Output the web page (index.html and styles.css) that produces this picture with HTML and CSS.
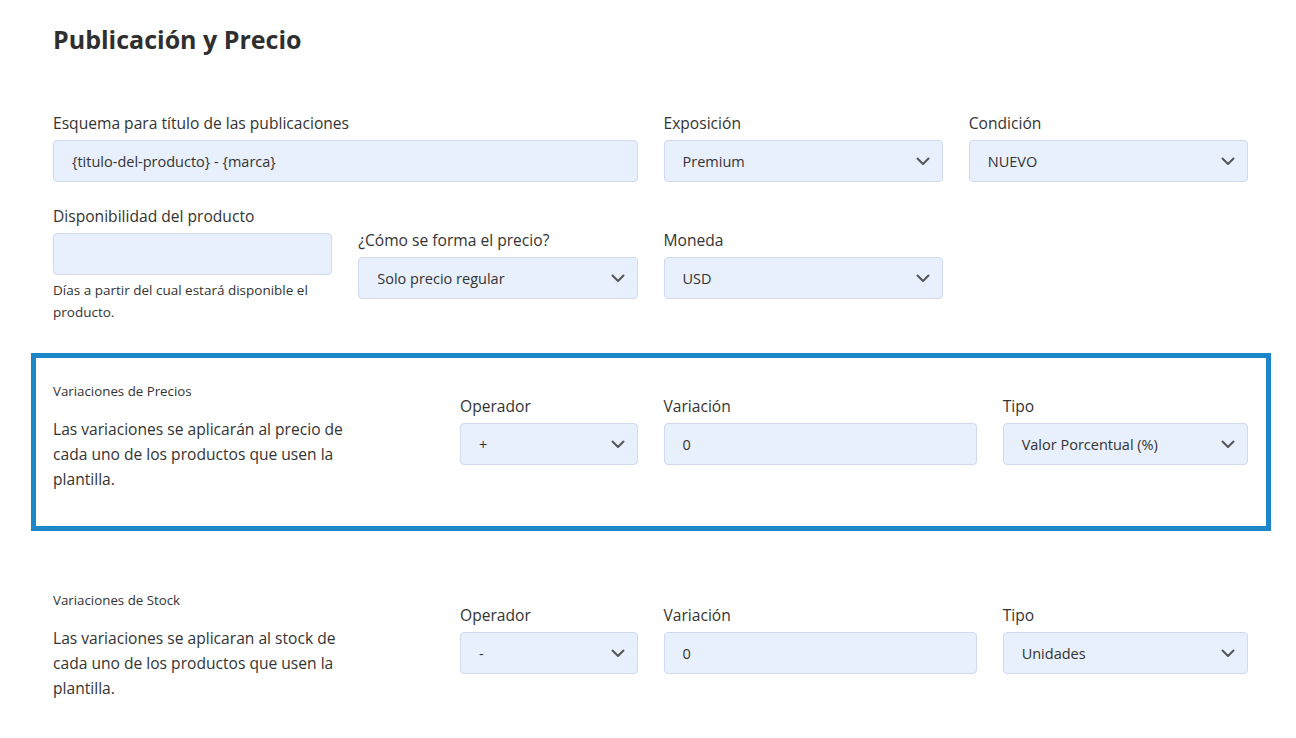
FILE: index.html
```html
<!DOCTYPE html>
<html lang="es">
<head>
<meta charset="utf-8">
<title>Publicación y Precio</title>
<link rel="stylesheet" href="styles.css">
</head>
<body>
<div class="page">
  <h2 class="title">Publicación y Precio</h2>

  <div class="grid row-top">
    <div class="field c6">
      <label class="label">Esquema para título de las publicaciones</label>
      <div class="control">{titulo-del-producto} - {marca}</div>
    </div>
    <div class="field c3">
      <label class="label">Exposición</label>
      <div class="control select"><span>Premium</span><svg class="chev" width="14" height="9" viewBox="0 0 14 9"><path d="M1.5 1.5 L7 7 L12.5 1.5" fill="none" stroke="#555" stroke-width="2" stroke-linecap="round" stroke-linejoin="round"/></svg></div>
    </div>
    <div class="field c3">
      <label class="label">Condición</label>
      <div class="control select"><span>NUEVO</span><svg class="chev" width="14" height="9" viewBox="0 0 14 9"><path d="M1.5 1.5 L7 7 L12.5 1.5" fill="none" stroke="#555" stroke-width="2" stroke-linecap="round" stroke-linejoin="round"/></svg></div>
    </div>
  </div>

  <div class="grid row-second">
    <div class="field c3">
      <label class="label">Disponibilidad del producto</label>
      <div class="control"></div>
      <p class="help">Días a partir del cual estará disponible el producto.</p>
    </div>
    <div class="field c3">
      <label class="label">¿Cómo se forma el precio?</label>
      <div class="control select"><span>Solo precio regular</span><svg class="chev" width="14" height="9" viewBox="0 0 14 9"><path d="M1.5 1.5 L7 7 L12.5 1.5" fill="none" stroke="#555" stroke-width="2" stroke-linecap="round" stroke-linejoin="round"/></svg></div>
    </div>
    <div class="field c3">
      <label class="label">Moneda</label>
      <div class="control select"><span>USD</span><svg class="chev" width="14" height="9" viewBox="0 0 14 9"><path d="M1.5 1.5 L7 7 L12.5 1.5" fill="none" stroke="#555" stroke-width="2" stroke-linecap="round" stroke-linejoin="round"/></svg></div>
    </div>
  </div>

  <section class="vbox highlighted">
    <div class="grid vrow">
      <div class="c4 vtext">
        <div class="vtitle">Variaciones de Precios</div>
        <p class="vdesc">Las variaciones se aplicarán al precio de cada uno de los productos que usen la plantilla.</p>
      </div>
      <div class="c8 grid vfields">
        <div class="field c3">
          <label class="label">Operador</label>
          <div class="control select"><span>+</span><svg class="chev" width="14" height="9" viewBox="0 0 14 9"><path d="M1.5 1.5 L7 7 L12.5 1.5" fill="none" stroke="#555" stroke-width="2" stroke-linecap="round" stroke-linejoin="round"/></svg></div>
        </div>
        <div class="field c5">
          <label class="label">Variación</label>
          <div class="control">0</div>
        </div>
        <div class="field c4">
          <label class="label">Tipo</label>
          <div class="control select"><span>Valor Porcentual (%)</span><svg class="chev" width="14" height="9" viewBox="0 0 14 9"><path d="M1.5 1.5 L7 7 L12.5 1.5" fill="none" stroke="#555" stroke-width="2" stroke-linecap="round" stroke-linejoin="round"/></svg></div>
        </div>
      </div>
    </div>
  </section>

  <section class="vbox">
    <div class="grid vrow">
      <div class="c4 vtext">
        <div class="vtitle">Variaciones de Stock</div>
        <p class="vdesc">Las variaciones se aplicaran al stock de cada uno de los productos que usen la plantilla.</p>
      </div>
      <div class="c8 grid vfields">
        <div class="field c3">
          <label class="label">Operador</label>
          <div class="control select"><span>-</span><svg class="chev" width="14" height="9" viewBox="0 0 14 9"><path d="M1.5 1.5 L7 7 L12.5 1.5" fill="none" stroke="#555" stroke-width="2" stroke-linecap="round" stroke-linejoin="round"/></svg></div>
        </div>
        <div class="field c5">
          <label class="label">Variación</label>
          <div class="control">0</div>
        </div>
        <div class="field c4">
          <label class="label">Tipo</label>
          <div class="control select"><span>Unidades</span><svg class="chev" width="14" height="9" viewBox="0 0 14 9"><path d="M1.5 1.5 L7 7 L12.5 1.5" fill="none" stroke="#555" stroke-width="2" stroke-linecap="round" stroke-linejoin="round"/></svg></div>
        </div>
      </div>
    </div>
  </section>
</div>
</body>
</html>
```
FILE: styles.css
```css
html, body {
  margin: 0;
  padding: 0;
  background: #ffffff;
}

body {
  font-family: "Open Sans", "Noto Sans", sans-serif;
  color: #333333;
}

.page {
  width: 1195px;
  padding: 23px 0 0 53px;
}

.title {
  margin: 0;
  font-size: 25px;
  line-height: 32px;
  font-weight: 700;
  color: #2f2f2f;
}

.grid {
  display: grid;
  grid-template-columns: repeat(12, 1fr);
  column-gap: 26px;
}

.c3 { grid-column: span 3; }
.c4 { grid-column: span 4; }
.c5 { grid-column: span 5; }
.c6 { grid-column: span 6; }
.c8 { grid-column: span 8; }

.row-top {
  margin-top: 56px;
  align-items: start;
}

.row-second {
  margin-top: 22px;
  align-items: center;
}

.label {
  display: block;
  font-size: 15.6px;
  line-height: 24px;
  margin-bottom: 5px;
  color: #333333;
}

.control {
  box-sizing: border-box;
  height: 42px;
  padding: 0 12px 0 18px;
  background: #e8effd;
  border: 1px solid #cfdaf0;
  border-radius: 4px;
  font-size: 14.5px;
  color: #333333;
  display: flex;
  align-items: center;
}

.select {
  justify-content: space-between;
}

.chev {
  flex: none;
}

.help {
  margin: 4px 0 0 0;
  font-size: 13.5px;
  line-height: 22px;
  color: #333333;
}

.vbox {
  margin: 30px 0 0 -22px;
  width: 1195px;
  padding: 23px 18px 23px 17px;
  border: 5px solid transparent;
}

.vbox + .vbox {
  margin-top: 31px;
}

.highlighted {
  border-color: #1b87c8;
}

.vrow {
  align-items: center;
}

.vtitle {
  font-size: 13.3px;
  line-height: 20px;
  color: #333333;
}

.vdesc {
  margin: 16px 0 11px 0;
  max-width: 300px;
  font-size: 15.6px;
  line-height: 25px;
  color: #333333;
}

.vfields {
  margin-bottom: 25px;
}
```
